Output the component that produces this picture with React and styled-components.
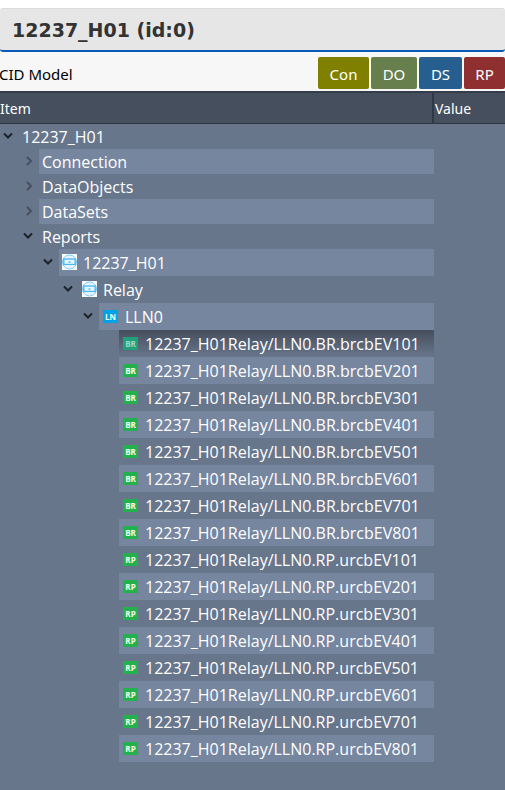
import React, { useState } from "react";
import styled, { createGlobalStyle, css } from "styled-components";

const GlobalStyle = createGlobalStyle`
  * { box-sizing: border-box; }
  html, body, #root { height: 100%; }
  body {
    margin: 0;
    background: #fff;
    font-family: "Open Sans", "Noto Sans", sans-serif;
  }
`;

const Page = styled.main`
  display: flex;
  flex-direction: column;
  min-height: 100%;
  padding-top: 8px;
`;

const TitleBar = styled.header`
  height: 44px;
  padding: 0 12px;
  border-top: 1px solid #dcdcdc;
  border-bottom: 2px solid #0a5ab9;
  border-radius: 3px;
  background: #e6e6e6;
`;

const Title = styled.h1`
  margin: 0;
  font: bold 19px/42px "DejaVu Sans", sans-serif;
  color: #333;
  white-space: nowrap;
`;

const Toolbar = styled.div`
  display: flex;
  align-items: center;
  justify-content: space-between;
  height: 39px;
  overflow: hidden;
  background: #f7f7f7;
`;

const ToolbarLabel = styled.h2`
  margin: 4px 0 0 -1px;
  font: 400 15px/24px "Noto Sans", sans-serif;
  color: #000;
`;

const ButtonGroup = styled.div`
  display: flex;
  gap: 2px;
  margin-top: 3px;
`;

const FilterButton = styled.button`
  height: 32px;
  width: ${(p) => p.$width}px;
  padding: 0;
  border: 0;
  border-radius: 2px;
  background: ${(p) => p.$color};
  color: #fff;
  font: 400 15px/34px "Noto Sans", sans-serif;
  text-align: center;
  cursor: pointer;
`;

const columns = css`
  display: grid;
  grid-template-columns: minmax(0, 1fr) 71px;
`;

const TreePanel = styled.section`
  flex: 1;
  background: #68768c;
`;

const ColumnHeader = styled.div`
  ${columns}
  height: 33px;
  border-top: 2px solid #343d49;
  border-bottom: 1px solid #2d3540;
  background: #464f5d;
`;

const HeaderCell = styled.span`
  font: 400 14px/31px "Noto Sans", sans-serif;
  color: #fff;
  padding-left: ${(p) => (p.$divided ? 0 : 1)}px;
  border-right: ${(p) => (p.$divided ? "2px solid #2f3843" : "0")};
`;

const TreeRows = styled.div`
  display: flex;
  flex-direction: column;
`;

const Row = styled.div`
  ${columns}
  height: ${(p) => (p.$tall ? 27 : 25)}px;
`;

const ItemCell = styled.div`
  display: flex;
  padding-left: ${(p) => p.$depth * 20}px;
`;

const Toggle = styled.button`
  flex: none;
  display: flex;
  align-items: center;
  justify-content: center;
  width: 19px;
  padding: 0 3px 1px 0;
  border: 0;
  background: none;
  color: ${(p) => (p.$open ? "#1b222c" : "#465060")};
  cursor: pointer;
`;

const ToggleSpace = styled.span`
  flex: none;
  width: 19px;
`;

const insets = { none: 3, device: 3, tag: 4 };

const ItemLabel = styled.div`
  flex: 1;
  min-width: 0;
  display: flex;
  align-items: center;
  gap: ${(p) => (p.$kind === "tag" ? 7 : 6)}px;
  padding-left: ${(p) => insets[p.$kind]}px;
  background: ${(p) =>
    p.$selected
      ? "linear-gradient(#454e5c, #68768c)"
      : p.$striped
        ? "#76869f"
        : "transparent"};
  color: #fff;
  font-size: 16px;
  line-height: 24px;
  white-space: nowrap;
`;

const Tag = styled.span`
  flex: none;
  width: 15px;
  height: 13px;
  background: ${(p) => p.$color};
  color: ${(p) => (p.$dim ? "#9fd8c6" : "#f2fff5")};
  font: bold 8px/13px "Open Sans", sans-serif;
  text-align: center;
`;

const DeviceSvg = styled.svg`
  flex: none;
  display: block;
  margin-bottom: 2px;
`;

function Chevron({ open }) {
  return (
    <svg width="10" height="10" viewBox="0 0 10 10" fill="none" stroke="currentColor" strokeWidth="2" aria-hidden="true">
      <path d={open ? "M1 2.5 L5 6.5 L9 2.5" : "M4 1 L8 5 L4 9"} />
    </svg>
  );
}

function DeviceIcon() {
  return (
    <DeviceSvg width="15" height="16" viewBox="0 0 15 16" fill="none" aria-hidden="true">
      <rect width="15" height="16" fill="#fff" />
      <circle cx="7.5" cy="8" r="7" stroke="#74c8f5" />
      <path d="M4.5 3H10.5M4.5 13H10.5" stroke="#c4e8fb" />
      <rect x="1.8" y="5" width="11.4" height="5.5" fill="#e8f7ff" stroke="#4db9f2" strokeWidth="1.4" />
      <path d="M6 8H9M7.5 7V9" stroke="#7accf4" />
    </DeviceSvg>
  );
}

const GREEN = "#22b14c";
const ICONS = {
  LN: "#00a2e8",
  BR: GREEN,
  RP: GREEN,
};

const reports = ["BR", "RP"].flatMap((kind) =>
  Array.from({ length: 8 }, (_, i) => {
    const block = kind === "BR" ? "brcb" : "urcb";
    const label = `12237_H01Relay/LLN0.${kind}.${block}EV${i + 1}01`;
    return { id: label, label, icon: kind };
  })
);

const tree = {
  id: "root",
  label: "12237_H01",
  children: [
    { id: "connection", label: "Connection", children: [] },
    { id: "objects", label: "DataObjects", children: [] },
    { id: "sets", label: "DataSets", children: [] },
    {
      id: "reports",
      label: "Reports",
      children: [
        {
          id: "device",
          label: "12237_H01",
          icon: "device",
          children: [
            {
              id: "relay",
              label: "Relay",
              icon: "device",
              children: [{ id: "lln0", label: "LLN0", icon: "LN", children: reports }],
            },
          ],
        },
      ],
    },
  ],
};

const filters = [
  { label: "Con", color: "#808000", width: 51 },
  { label: "DO", color: "#667f4c", width: 46 },
  { label: "DS", color: "#265f8f", width: 43 },
  { label: "RP", color: "#8f2f2f", width: 41 },
];

function flatten(node, open, depth = 0) {
  const below = open[node.id] ? node.children : [];
  return [{ node, depth }, ...(below || []).flatMap((c) => flatten(c, open, depth + 1))];
}

function iconKind(icon) {
  if (!icon) return "none";
  return icon === "device" ? "device" : "tag";
}

function ItemIcon({ name, selected }) {
  if (!name) return null;
  if (name === "device") return <DeviceIcon />;
  return (
    <Tag $color={selected ? "#20a17a" : ICONS[name]} $dim={selected}>
      {name}
    </Tag>
  );
}

export default function App() {
  const [open, setOpen] = useState({ root: true, reports: true, device: true, relay: true, lln0: true });
  const [selected, setSelected] = useState(reports[0].id);
  const rows = flatten(tree, open);

  return (
    <Page>
      <GlobalStyle />
      <TitleBar>
        <Title>12237_H01 (id:0)</Title>
      </TitleBar>
      <Toolbar>
        <ToolbarLabel>CID Model</ToolbarLabel>
        <ButtonGroup>
          {filters.map((f) => (
            <FilterButton key={f.label} type="button" $color={f.color} $width={f.width}>
              {f.label}
            </FilterButton>
          ))}
        </ButtonGroup>
      </Toolbar>
      <TreePanel>
        <ColumnHeader>
          <HeaderCell $divided>Item</HeaderCell>
          <HeaderCell>Value</HeaderCell>
        </ColumnHeader>
        <TreeRows role="tree" aria-label="CID Model">
          {rows.map(({ node, depth }, index) => {
            const isOpen = !!open[node.id];
            const isSelected = selected === node.id;
            return (
              <Row
                key={node.id}
                role="treeitem"
                aria-level={depth + 1}
                aria-selected={isSelected}
                aria-expanded={node.children ? isOpen : undefined}
                $tall={!!node.icon}
              >
                <ItemCell $depth={depth}>
                  {node.children ? (
                    <Toggle
                      type="button"
                      aria-label={`Toggle ${node.label}`}
                      $open={isOpen}
                      onClick={() => setOpen({ ...open, [node.id]: !isOpen })}
                    >
                      <Chevron open={isOpen} />
                    </Toggle>
                  ) : (
                    <ToggleSpace />
                  )}
                  <ItemLabel
                    $kind={iconKind(node.icon)}
                    $striped={index % 2 === 1}
                    $selected={isSelected}
                    onClick={() => setSelected(node.id)}
                  >
                    <ItemIcon name={node.icon} selected={isSelected} />
                    <span>{node.label}</span>
                  </ItemLabel>
                </ItemCell>
              </Row>
            );
          })}
        </TreeRows>
      </TreePanel>
    </Page>
  );
}
